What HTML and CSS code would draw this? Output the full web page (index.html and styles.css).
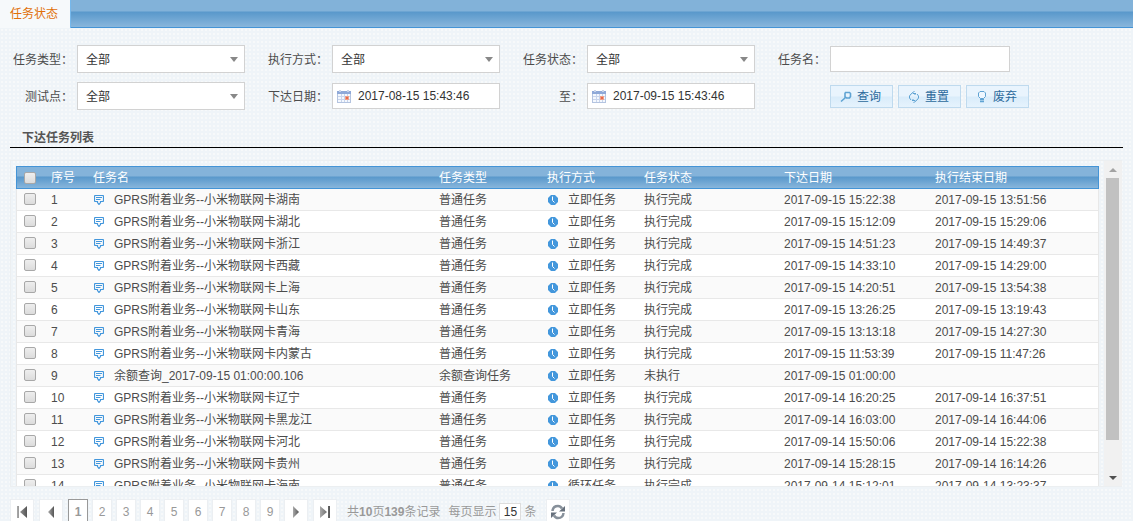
FILE: index.html
```html
<!DOCTYPE html>
<html lang="zh-CN">
<head>
<meta charset="utf-8">
<title>任务状态</title>
<link rel="stylesheet" href="styles.css">
</head>
<body>
<svg class="defs" aria-hidden="true">
  <linearGradient id="steel"><stop offset="0" stop-color="#aaa"/><stop offset="1" stop-color="#555"/></linearGradient>
  <symbol id="note" viewBox="0 0 10 10"><path d="M1.500 .5h7q1 0 1 1v4q0 1-1 1H6.500v1L5 9.500 3.500 7.500v-1h-2q-1 0-1-1v-4q0-1 1-1zM2 2.500h6M2 4.500h4.500" fill="none" stroke="#4397dc" stroke-width="1.200"/></symbol>
  <symbol id="clock" viewBox="0 0 10 10"><path d="M3 0h4l3 3v4L7 10H3L0 7V3z" fill="#4397dc"/><path d="M4.500 1.500v4L6.500 7.500" fill="none" stroke="#fff"/></symbol>
  <symbol id="cal" viewBox="0 0 14 13"><rect x=".5" y="1.500" width="13" height="11" fill="#f4f8fe" stroke="#b4c4e0"/><path d="M0 1h14v3H0z" fill="#8fa9d8"/><path d="M2 0h2v2H2zM10 0h2v2h-2z" fill="#c8d4ea"/><path d="M1 6.500h12M1 9.500h12M4.500 4v8M7.500 4v8M10.500 4v8" stroke="#c9d5ec" fill="none"/><path d="M8 6h4v4H8z" fill="#f0a088"/><path d="M9 7h2v2H9z" fill="#e8694a"/></symbol>
</svg>
<div class="page">
  <nav class="tabs"><a class="tab" href="#">任务状态</a></nav>
  <form class="filters">
    <label for="type">任务类型：</label>
    <div class="pick"><select id="type"><option>全部</option></select></div>
    <label for="mode">执行方式：</label>
    <div class="pick"><select id="mode"><option>全部</option></select></div>
    <label for="state">任务状态：</label>
    <div class="pick"><select id="state"><option>全部</option></select></div>
    <label for="name">任务名：</label>
    <input class="name" id="name" type="text">
    <label for="point">测试点：</label>
    <div class="pick"><select id="point"><option>全部</option></select></div>
    <label for="from">下达日期：</label>
    <div class="date"><svg><use href="#cal"/></svg><input id="from" type="text" value="2017-08-15 15:43:46"></div>
    <label for="to">至：</label>
    <div class="date"><svg><use href="#cal"/></svg><input id="to" type="text" value="2017-09-15 15:43:46"></div>
    <div class="actions">
      <button type="button"><svg viewBox="0 0 12 12"><path d="M5.500 1.500h4l1 1v3l-1 1.500H6.500L5 6V2.500zM5 7L1 10.500" fill="none" stroke="#5fa3d3" stroke-width="1.600"/></svg>查询</button>
      <button type="button"><svg viewBox="0 0 12 12"><path d="M5 1.500L3 3 1.500 5v2L3 9M7 10.500L9 9l1.500-2V5L9 3M6.500 0L5 1.500 7.500 4M5.500 12L7 10.500 4.500 8M5 2.500h3M4 9.500h3" fill="none" stroke="#5fa3d3"/></svg>重置</button>
      <button type="button"><svg viewBox="0 0 12 12"><path d="M4 .5h4L9.500 2v3.500L7.500 7.500h-3L2.500 5.500V2z" fill="#eef7ff" stroke="#5fa3d3"/><path d="M4 8.500h4M4 10.500h4" stroke="#5fa3d3" stroke-width="1.500" fill="none"/></svg>废弃</button>
    </div>
  </form>
  <h2>下达任务列表</h2>
  <section class="list">
    <div class="view">
      <table>
        <colgroup><col class="c1"><col class="c2"><col class="c3"><col class="c4"><col class="c5"><col class="c6"><col class="c7"><col></colgroup>
        <thead><tr><th><input type="checkbox" aria-label="全选"></th><th>序号</th><th>任务名</th><th>任务类型</th><th>执行方式</th><th>任务状态</th><th>下达日期</th><th>执行结束日期</th></tr></thead>
        <tbody id="rows"></tbody>
      </table>
    </div>
    <div class="scroll" aria-hidden="true"><i class="up"></i><div class="track"><div class="thumb"></div></div><i class="down"></i></div>
  </section>
  <footer class="pager">
    <button type="button" aria-label="首页"><svg viewBox="0 0 12 12"><path d="M1 0h2v12H1zM11 0v12L4 6z"/></svg></button>
    <button type="button" class="gap" aria-label="上一页"><svg viewBox="0 0 12 12"><path d="M9 0v12L3 6z"/></svg></button>
    <button type="button" class="num gap on">1</button>
    <button type="button" class="num">2</button>
    <button type="button" class="num">3</button>
    <button type="button" class="num">4</button>
    <button type="button" class="num">5</button>
    <button type="button" class="num">6</button>
    <button type="button" class="num">7</button>
    <button type="button" class="num">8</button>
    <button type="button" class="num">9</button>
    <button type="button" aria-label="下一页"><svg viewBox="0 0 12 12"><path d="M3 0v12l6-6z"/></svg></button>
    <button type="button" class="gap" aria-label="末页"><svg viewBox="0 0 12 12"><path d="M9 0h2v12H9zM1 0v12l7-6z"/></svg></button>
    <span class="total">共<b>10</b>页<b>139</b>条记录</span>
    <label class="size">每页显示<input type="text" value="15">条</label>
    <button type="button" class="reload" aria-label="刷新"><svg viewBox="0 0 16 16"><path d="M2.500 7q.5-5 5.500-5 2.500 0 4 2.500M13.500 9q-.5 5-5.500 5-2.500 0-4-2.500" fill="none" stroke="#87909a" stroke-width="2.500"/><path d="M15 2v5.500H9zM1 14V8.500h6z" fill="#66707c"/></svg></button>
  </footer>
</div>
<script src="rows.js"></script>
</body>
</html>
```
FILE: rows.js
```js
const card = place => "GPRS附着业务--小米物联网卡" + place;
const tasks = [
  [card("湖南"), "15 15:22:38", "15 13:51:56"],
  [card("湖北"), "15 15:12:09", "15 15:29:06"],
  [card("浙江"), "15 14:51:23", "15 14:49:37"],
  [card("西藏"), "15 14:33:10", "15 14:29:00"],
  [card("上海"), "15 14:20:51", "15 13:54:38"],
  [card("山东"), "15 13:26:25", "15 13:19:43"],
  [card("青海"), "15 13:13:18", "15 14:27:30"],
  [card("内蒙古"), "15 11:53:39", "15 11:47:26"],
  ["余额查询_2017-09-15 01:00:00.106", "15 01:00:00", "", "余额查询任务", "立即任务", "未执行"],
  [card("辽宁"), "14 16:20:25", "14 16:37:51"],
  [card("黑龙江"), "14 16:03:00", "14 16:44:06"],
  [card("河北"), "14 15:50:06", "14 15:22:38"],
  [card("贵州"), "14 15:28:15", "14 16:14:26"],
  [card("海南"), "14 15:12:01", "14 13:23:37", "普通任务", "循环任务"]
];
const day = text => text && "2017-09-" + text;
document.getElementById("rows").innerHTML = tasks.map(
  ([name, start, end, type = "普通任务", mode = "立即任务", state = "执行完成"], i) =>
    `<tr><td><input type="checkbox" aria-label="选择 ${i + 1}"></td><td>${i + 1}</td>` +
    `<td><svg class="note"><use href="#note"/></svg>${name}</td><td>${type}</td>` +
    `<td><svg class="clock"><use href="#clock"/></svg>${mode}</td><td>${state}</td>` +
    `<td>${day(start)}</td><td>${day(end)}</td></tr>`
).join("");
```
FILE: styles.css
```css
* { box-sizing: border-box; }
body {
  margin: 0;
  overflow: hidden;
  font: 12px/18px "Liberation Sans", "Noto Sans CJK SC", sans-serif;
  color: #4c4c4c;
  background: #eff4f8 radial-gradient(circle, #f7f9fa 1px, transparent 1px) 0 0 / 4px 4px;
}
input, select, button { font: inherit; color: inherit; margin: 0; }
svg { display: block; flex: none; }
.defs { position: absolute; width: 0; height: 0; }
.page { display: flex; flex-direction: column; height: 100vh; }

.tabs {
  display: flex;
  flex: none;
  height: 28px;
  background: linear-gradient(#82b2d9 0 11px, #5998cb 12px, #88b6dc 27px);
  border-bottom: 1px solid #4494d6;
}
.tab {
  height: 28px;
  padding: 5px 12px 0 10px;
  background: #f6f9fb;
  border-right: 1px solid #76b8ec;
  color: #e17009;
  text-decoration: none;
}

.filters {
  display: grid;
  flex: none;
  grid-template-columns: 77px 168px 87px 168px 87px 168px 75px 1fr;
  grid-template-rows: 28px 28px;
  row-gap: 9px;
  align-items: center;
  padding: 17px 0 0;
}
.filters > label { text-align: right; white-space: nowrap; padding: 1px 4px 0 0; }
.pick { position: relative; }
.pick::after {
  content: "";
  position: absolute;
  right: 7px;
  top: 12px;
  border: 4px solid transparent;
  border-top: 5px solid #888;
  border-bottom: 0;
  pointer-events: none;
}
.pick select, .date, .name {
  display: block;
  width: 100%;
  background: #fff;
  border: 1px solid #d2d2d2;
  border-radius: 0;
}
.pick select { height: 28px; padding: 2px 8px 0; appearance: none; color: #333; }
.name { width: 180px; height: 26px; }
.date { display: flex; align-items: center; gap: 7px; height: 26px; padding: 0 4px; }
.date svg { width: 14px; height: 13px; }
.date input { width: 100%; padding: 0; border: 0; background: none; color: #333; }
.actions { display: flex; gap: 5px; padding-top: 1px; grid-column: 8; }
.actions button {
  display: flex;
  align-items: center;
  gap: 5px;
  height: 23px;
  padding: 1px 11px 0 9px;
  background: linear-gradient(#e9f4fd 0 10px, #d9ecfa 11px, #e6f3fd);
  border: 1px solid #bfdaee;
  color: #2c6a9c;
}
.actions svg { width: 12px; height: 12px; }

h2 {
  flex: none;
  margin: 18px 10px 12px;
  padding: 1px 12px 0;
  border-bottom: 1px solid #000;
  font-size: 12px;
  line-height: 18px;
  color: #555;
}
.list {
  display: flex;
  flex: 1;
  min-height: 0;
  margin: 0 11px 0 10px;
  border: 1px solid #eceff1;
  border-width: 1px 0 1px 1px;
}
.view { flex: 1; min-width: 0; padding: 5px 5px 0; overflow: hidden; }
table { width: 100%; table-layout: fixed; border-collapse: separate; border-spacing: 0; white-space: nowrap; }
.c1 { width: 34px; }
.c2 { width: 42px; }
.c3 { width: 346px; }
.c4 { width: 108px; }
.c5 { width: 97px; }
.c6 { width: 140px; }
.c7 { width: 151px; }
th, td { height: 22px; padding: 0 1px; text-align: left; }
th {
  height: 23px;
  border: solid #4494d6;
  border-width: 1px 0;
  background: linear-gradient(#84b3da 0 9px, #5998cb 10px, #88b6dc);
  color: #fff;
  font-weight: normal;
}
td { border-bottom: 1px solid #e8e8e8; background: #fff; }
tbody tr:nth-child(odd) td { background: #fafafa; }
th:first-child, td:first-child { border-left: 1px solid #e8e8e8; padding-left: 7px; }
th:last-child, td:last-child { border-right: 1px solid #e8e8e8; }
th:first-child, th:last-child { border-color: #4494d6; }
td:first-child { padding-bottom: 2px; }
table input {
  display: block;
  appearance: none;
  width: 12px;
  height: 12px;
  border: 1px solid #a8a8a8;
  border-radius: 2px;
  background: linear-gradient(#eee, #dcdcdc);
}
td svg { display: inline-block; vertical-align: -1px; width: 10px; height: 10px; margin: 0 10px 0 1px; }

.scroll { display: flex; flex-direction: column; flex: none; width: 18px; padding: 0 3px 0 2px; background: #f1f1f1; }
.track { flex: 1; }
.thumb { width: 13px; height: 90%; background: #c1c1c1; }
.up, .down { height: 17px; display: flex; align-items: center; justify-content: center; }
.up::after { content: ""; border: 4px solid transparent; border-bottom-color: #a3a3a3; border-top: 0; }
.down::after { content: ""; border: 4px solid transparent; border-top-color: #505050; border-bottom: 0; }

.pager { display: flex; align-items: flex-start; flex: none; height: 34px; padding: 12px 10px 0; overflow: hidden; color: #999; }
.pager button {
  display: flex;
  flex: none;
  align-items: center;
  justify-content: center;
  width: 24px;
  height: 26px;
  margin-right: 4px;
  padding: 0;
  background: #fff;
  border: 1px solid #eceff2;
}
.pager svg { width: 12px; height: 12px; fill: url(#steel); }
.pager .num { width: 20px; }
.pager .gap { margin-left: 1px; }
.pager .on { border-color: #999; font-weight: bold; }
.total { margin: 4px 8px 0 6px; }
.size { display: flex; margin-top: 4px; }
.size input { width: 22px; height: 17px; margin: 0 3px; padding: 0; border: 1px solid #ddd; background: #fff; color: #333; text-align: center; }
.pager .reload { margin-left: 10px; }
.pager .reload svg { width: 16px; height: 16px; }
```
